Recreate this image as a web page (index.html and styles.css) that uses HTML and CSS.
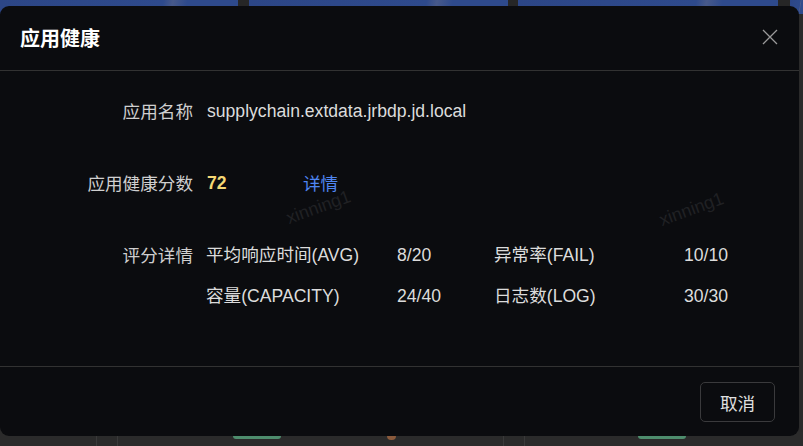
FILE: index.html
```html
<!DOCTYPE html>
<html lang="zh-CN">
<head>
<meta charset="utf-8">
<title>应用健康</title>
<link rel="stylesheet" href="styles.css">
</head>
<body>
<div class="page">
  <div class="page-top">
    <div class="tile t1"></div>
    <div class="tile t2"></div>
    <div class="tile t3"></div>
    <div class="tile t4"></div>
  </div>
  <div class="page-bottom">
    <div class="cell c1"></div>
    <div class="cell c2"></div>
    <div class="cell c3"><span class="arc"></span><span class="dot"></span></div>
    <div class="cell c4"></div>
    <div class="cell c5"><span class="arc"></span></div>
  </div>
</div>

<div class="modal">
  <div class="modal-header">
    <div class="modal-title">应用健康</div>
    <button class="modal-close" aria-label="关闭">
      <svg width="16" height="16" viewBox="0 0 16 16"><path d="M1 1L15 15M15 1L1 15" stroke="#9a9a9a" stroke-width="1.3" fill="none"/></svg>
    </button>
  </div>
  <div class="modal-body">
    <div class="form-item">
      <div class="form-label">应用名称</div>
      <div class="form-value">supplychain.extdata.jrbdp.jd.local</div>
    </div>
    <div class="form-item">
      <div class="form-label">应用健康分数</div>
      <div class="form-value score-line">
        <span class="score">72</span>
        <a class="link">详情</a>
      </div>
    </div>
    <div class="form-item">
      <div class="form-label">评分详情</div>
      <div class="score-grid">
        <span>平均响应时间(AVG)</span><span>8/20</span><span>异常率(FAIL)</span><span>10/10</span>
        <span>容量(CAPACITY)</span><span>24/40</span><span>日志数(LOG)</span><span>30/30</span>
      </div>
    </div>
    <span class="watermark wm1">xinning1</span>
    <span class="watermark wm2">xinning1</span>
  </div>
  <div class="modal-footer">
    <button class="btn">取消</button>
  </div>
</div>
</body>
</html>
```
FILE: styles.css
```css
* { box-sizing: border-box; }
html, body {
  margin: 0;
  padding: 0;
  width: 803px;
  height: 446px;
  overflow: hidden;
  background: #2a2a2a;
  font-family: "Liberation Sans", "Noto Sans CJK SC", sans-serif;
}
.page {
  width: 803px;
  height: 446px;
  display: flex;
  flex-direction: column;
  justify-content: space-between;
}
.page-top {
  height: 14px;
  display: flex;
  background: #262626;
}
.tile {
  flex: none;
  background: linear-gradient(100deg, #2c4686 0%, #2e4a8c 68%, #47598a 72%, #2e4a8c 78%);
}
.t1 { width: 238px; margin-right: 11px; }
.t2 { width: 259px; margin-right: 10px; }
.t3 { width: 260px; margin-right: 12px; }
.t4 { flex: 1; }
.page-bottom {
  height: 14px;
  display: flex;
  background: #2b2b2b;
}
.cell {
  flex: none;
  border-right: 1px solid #3a3a3a;
  position: relative;
}
.c1 { width: 97px; }
.c2 { width: 21px; }
.c3 { width: 386px; }
.c4 { width: 21px; }
.c5 { flex: 1; border-right: 0; }
.arc {
  position: absolute;
  top: 4px;
  width: 48px;
  height: 3px;
  border-radius: 0 0 24px 24px;
  background: #4e8d6d;
}
.c3 .arc { left: 115px; }
.c5 .arc { left: 113px; }
.dot {
  position: absolute;
  top: 4px;
  left: 269px;
  width: 9px;
  height: 4px;
  border-radius: 0 0 5px 5px;
  background: #8a5a3c;
}
.modal {
  position: absolute;
  left: 0;
  top: 6px;
  width: 799px;
  height: 430px;
  background: #0b0c0f;
  border-radius: 9px;
  display: flex;
  flex-direction: column;
  overflow: hidden;
}
.modal-header {
  height: 65px;
  flex: none;
  padding: 0 21px 2px 20px;
  display: flex;
  align-items: center;
  justify-content: space-between;
  border-bottom: 1px solid #323232;
}
.modal-title {
  color: #ffffff;
  font-size: 20px;
  font-weight: bold;
  font-family: "Noto Sans CJK SC", sans-serif;
}
.modal-close {
  background: none;
  border: 0;
  padding: 0;
  width: 16px;
  height: 16px;
  display: flex;
}
.modal-body {
  position: relative;
  flex: 1;
  padding-top: 20px;
  display: flex;
  flex-direction: column;
  gap: 32px;
  color: #d6d6d6;
  font-size: 17.6px;
}
.form-item {
  display: grid;
  grid-template-columns: 193px 1fr;
  column-gap: 14px;
  line-height: 40px;
}
.form-label {
  text-align: right;
  color: #cfcfcf;
  font-family: "Noto Sans CJK SC", sans-serif;
}
.form-value {
  color: #dcdcdc;
}
.score-line {
  display: flex;
}
.score {
  width: 96px;
  color: #f5d874;
  font-weight: bold;
}
.link {
  color: #4f86f2;
  font-family: "Noto Sans CJK SC", sans-serif;
}
.score-grid {
  display: grid;
  grid-template-columns: 191px 97px 190px auto;
  grid-auto-rows: 41px;
  line-height: 40px;
  margin-left: -1px;
  color: #dcdcdc;
}
.watermark {
  position: absolute;
  color: #202124;
  font-size: 18px;
  transform: rotate(-20deg);
  pointer-events: none;
}
.wm1 { left: 285px; top: 126px; }
.wm2 { left: 658px; top: 128px; }
.modal-footer {
  height: 70px;
  flex: none;
  border-top: 1px solid #323232;
  padding: 15px 24px 0 0;
  display: flex;
  justify-content: flex-end;
  align-items: flex-start;
}
.btn {
  width: 75px;
  height: 40px;
  background: transparent;
  border: 1px solid #3a3a3c;
  border-radius: 5px;
  color: #e0e0e0;
  font-size: 17.6px;
  font-family: "Noto Sans CJK SC", sans-serif;
  padding: 0;
}
```
